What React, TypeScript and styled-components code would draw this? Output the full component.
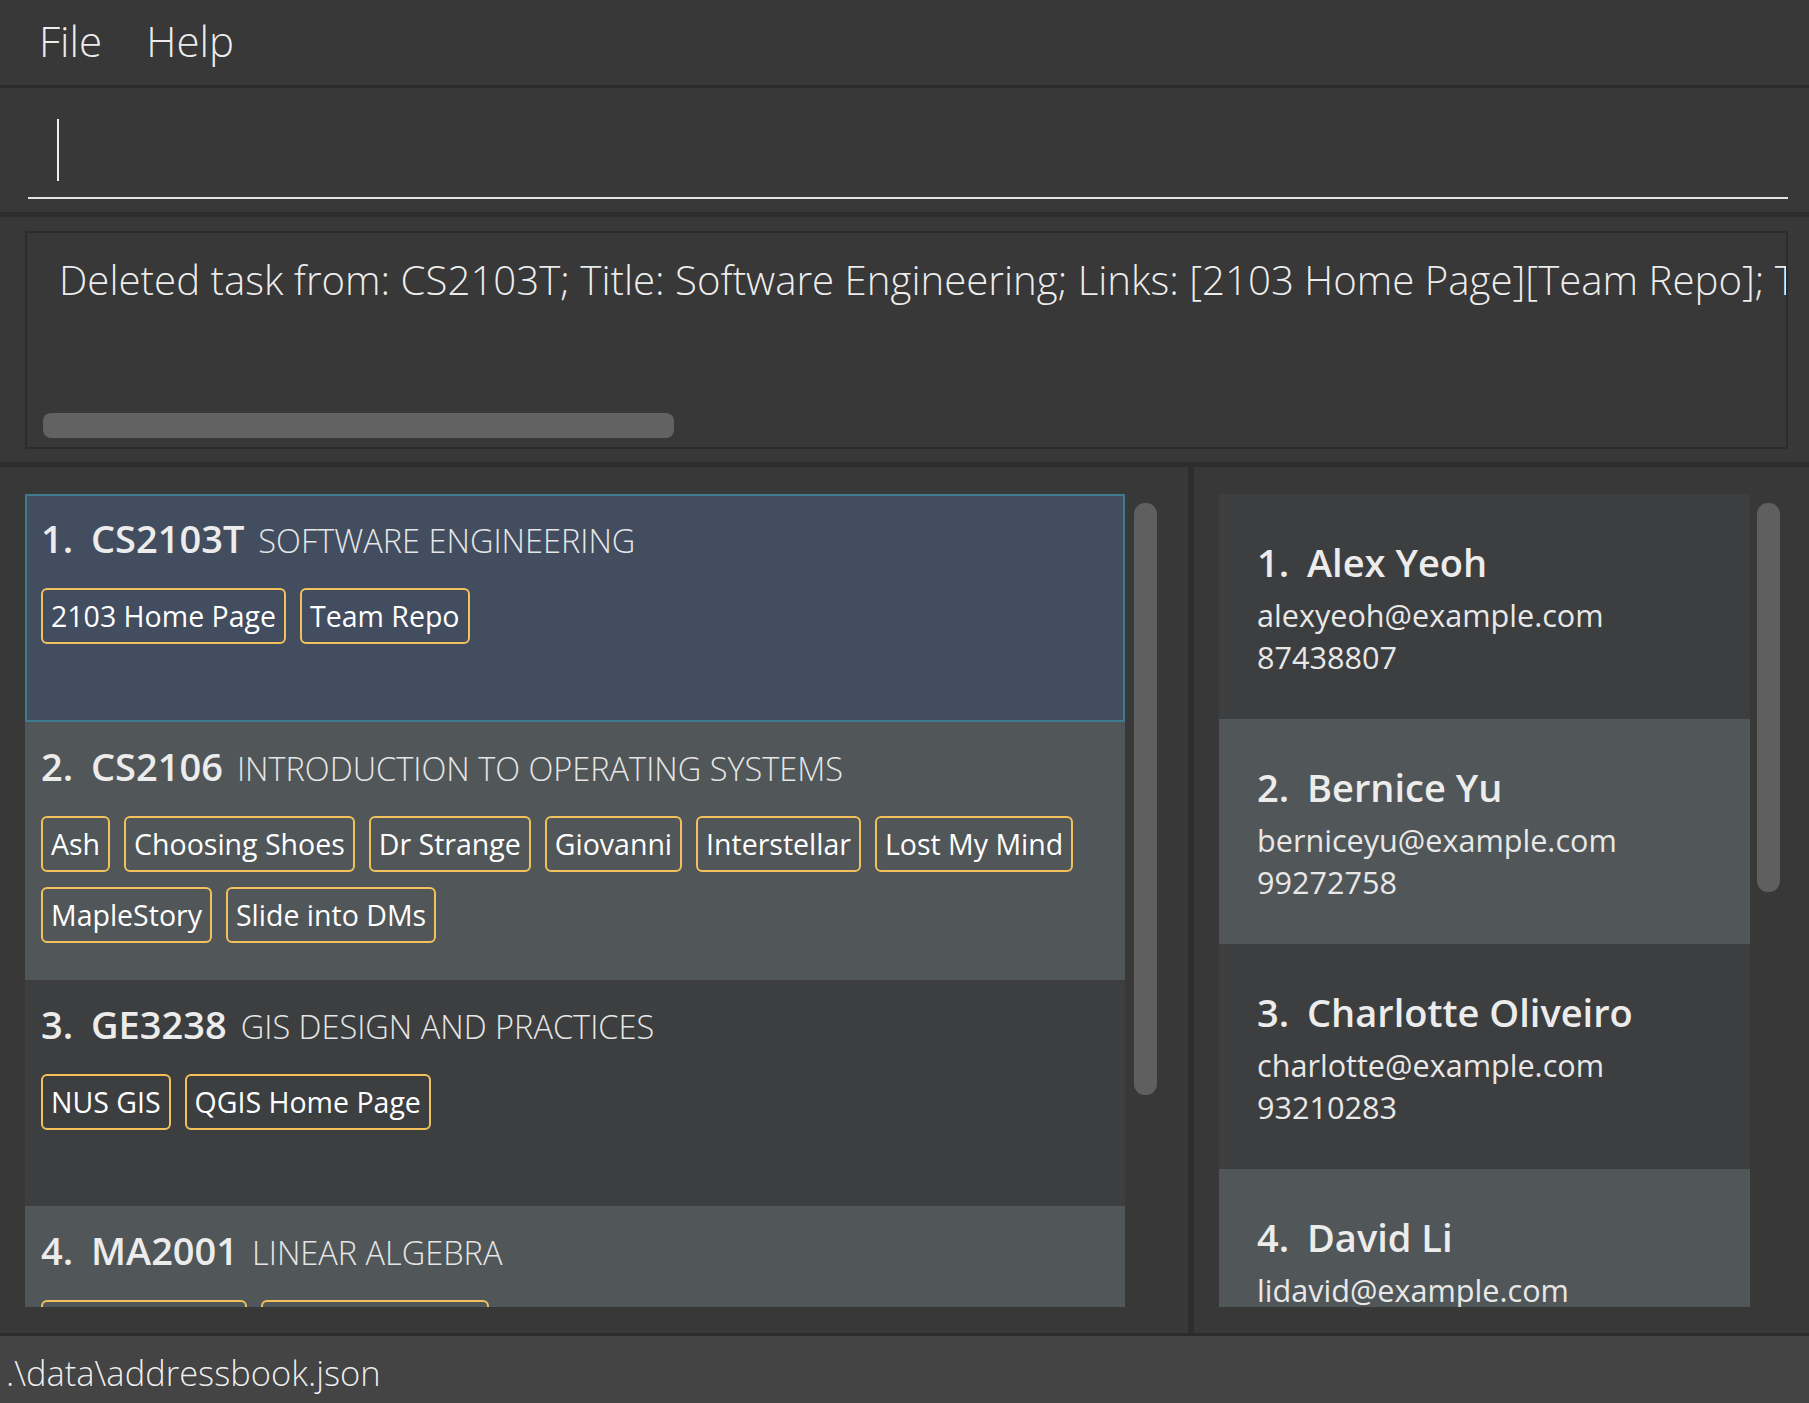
import React from "react";
import styled, { createGlobalStyle } from "styled-components";

type Tone = "even" | "odd" | "selected";

const GlobalStyle = createGlobalStyle`
  html, body {
    margin: 0;
    padding: 0;
    background: #383838;
  }
  body {
    font-family: "Open Sans", "Noto Sans", sans-serif;
    color: #ffffff;
  }
  * {
    box-sizing: border-box;
  }
`;

const toneColor: Record<Tone, string> = {
  even: "#3c3e3f",
  odd: "#515658",
  selected: "#424d5f",
};

const Window = styled.div`
  width: 1809px;
  height: 1403px;
  display: flex;
  flex-direction: column;
  background: #383838;
  overflow: hidden;
`;

const MenuBar = styled.div`
  height: 88px;
  flex: none;
  display: flex;
  gap: 44px;
  padding-left: 39px;
  border-bottom: 3px solid #2b2b2b;
`;

const MenuItem = styled.span`
  font-weight: 300;
  font-size: 42px;
  line-height: 81px;
  color: rgba(255, 255, 255, 0.92);
`;

const CommandPane = styled.div`
  height: 129px;
  flex: none;
  padding: 0 21px 0 28px;
  border-bottom: 5px solid #2d2d2d;
`;

const CommandField = styled.div`
  height: 111px;
  padding: 31px 0 0 29px;
  border-bottom: 2px solid #e4e4e4;
`;

const Caret = styled.div`
  width: 2px;
  height: 62px;
  background: #f0f0f0;
`;

const ResultPane = styled.div`
  height: 250px;
  flex: none;
  padding: 14px 21px 0 25px;
  border-bottom: 5px solid #2d2d2d;
`;

const ResultBox = styled.div`
  height: 218px;
  border: 2px solid #2c2c2c;
  display: flex;
  flex-direction: column;
  justify-content: space-between;
  padding: 21px 0 9px 16px;
  overflow: hidden;
`;

const ResultText = styled.div`
  margin-left: 16px;
  white-space: nowrap;
  font-weight: 300;
  font-size: 40.2px;
  line-height: 52px;
  color: rgba(255, 255, 255, 0.92);
`;

const HThumb = styled.div`
  width: 631px;
  height: 25px;
  flex: none;
  border-radius: 8px;
  background: #626262;
`;

const Lists = styled.div`
  flex: 1;
  display: flex;
  min-height: 0;
  border-bottom: 3px solid #2c2c2c;
`;

const ListPane = styled.div<{ $width: number }>`
  width: ${({ $width }) => $width}px;
  flex: none;
  display: flex;
  padding: 27px 25px 26px 25px;
`;

const ListView = styled.div`
  flex: 1;
  display: flex;
  flex-direction: column;
  overflow: hidden;
`;

const ScrollLane = styled.div<{ $width: number; $inset: number }>`
  width: ${({ $width }) => $width}px;
  flex: none;
  padding: 9px 0 0 ${({ $inset }) => $inset}px;
`;

const VThumb = styled.div<{ $height: number }>`
  width: 23px;
  height: ${({ $height }) => $height}px;
  border-radius: 11px;
  background: #5f5f5f;
`;

const Divider = styled.div`
  width: 6px;
  flex: none;
  background: #2e2e2e;
`;

const StatusBar = styled.div`
  flex: none;
  height: 67px;
  display: flex;
  align-items: center;
  padding: 6px 0 0 6px;
  background: #444444;
  font-weight: 300;
  font-size: 34.5px;
  color: rgba(255, 255, 255, 0.92);
`;

/* task cards */

const TaskCard = styled.div<{ $tone: Tone }>`
  flex: none;
  min-height: ${({ $tone }) => ($tone === "selected" ? 228 : 226)}px;
  padding: 20px 16px 37px 16px;
  background: ${({ $tone }) => toneColor[$tone]};
  box-shadow: ${({ $tone }) =>
    $tone === "selected" ? "inset 0 0 0 2px #3e7b91" : "none"};
`;

const TitleRow = styled.div`
  display: flex;
  align-items: baseline;
  line-height: 48px;
  white-space: nowrap;
`;

const Index = styled.span`
  width: 50px;
  flex: none;
  font-weight: 600;
  font-size: 38px;
  color: #ececec;
`;

const Code = styled.span`
  font-weight: 600;
  font-size: 38px;
  color: #ececec;
  margin-right: 14px;
`;

const CourseTitle = styled.span`
  font-weight: 300;
  font-size: 32.5px;
  text-transform: uppercase;
  color: #e6e6e6;
`;

const TagList = styled.div`
  display: flex;
  flex-wrap: wrap;
  gap: 15px 14px;
  margin-top: 23px;
`;

const Tag = styled.span`
  height: 56px;
  padding: 0 8px;
  border: 2px solid #f2c15c;
  border-radius: 6px;
  font-size: 28.5px;
  line-height: 52px;
  color: #ffffff;
  white-space: nowrap;
`;

/* person cards */

const PersonCard = styled.div<{ $tone: Tone }>`
  flex: none;
  height: 225px;
  padding: 44px 0 0 38px;
  background: ${({ $tone }) => toneColor[$tone]};
`;

const NameRow = styled.div`
  display: flex;
  align-items: baseline;
  line-height: 48px;
  white-space: nowrap;
`;

const Name = styled.span`
  font-weight: 600;
  font-size: 38px;
  color: #ececec;
`;

const Detail = styled.div<{ $first?: boolean }>`
  margin-top: ${({ $first }) => ($first ? 8 : 0)}px;
  font-size: 30.6px;
  line-height: 42px;
  color: #e8e8e8;
  white-space: nowrap;
`;

const tasks = [
  {
    code: "CS2103T",
    title: "Software Engineering",
    links: ["2103 Home Page", "Team Repo"],
  },
  {
    code: "CS2106",
    title: "Introduction to Operating Systems",
    links: [
      "Ash",
      "Choosing Shoes",
      "Dr Strange",
      "Giovanni",
      "Interstellar",
      "Lost My Mind",
      "MapleStory",
      "Slide into DMs",
    ],
  },
  {
    code: "GE3238",
    title: "GIS Design and Practices",
    links: ["NUS GIS", "QGIS Home Page"],
  },
  {
    code: "MA2001",
    title: "Linear Algebra",
    links: ["Lecture Notes", "Tutorial Answer"],
  },
];

const persons = [
  { name: "Alex Yeoh", email: "alexyeoh@example.com", phone: "87438807" },
  { name: "Bernice Yu", email: "berniceyu@example.com", phone: "99272758" },
  {
    name: "Charlotte Oliveiro",
    email: "charlotte@example.com",
    phone: "93210283",
  },
  { name: "David Li", email: "lidavid@example.com", phone: "91031282" },
];

const tone = (i: number, selected?: boolean): Tone =>
  selected ? "selected" : i % 2 === 0 ? "even" : "odd";

export default function App() {
  return (
    <Window>
      <GlobalStyle />
      <MenuBar>
        <MenuItem>File</MenuItem>
        <MenuItem>Help</MenuItem>
      </MenuBar>

      <CommandPane>
        <CommandField>
          <Caret />
        </CommandField>
      </CommandPane>

      <ResultPane>
        <ResultBox>
          <ResultText>
            Deleted task from: CS2103T; Title: Software Engineering; Links:
            [2103 Home Page][Team Repo]; Tags: [module]
          </ResultText>
          <HThumb />
        </ResultBox>
      </ResultPane>

      <Lists>
        <ListPane $width={1188}>
          <ListView>
            {tasks.map((t, i) => (
              <TaskCard key={t.code} $tone={tone(i, i === 0)}>
                <TitleRow>
                  <Index>{i + 1}.</Index>
                  <Code>{t.code}</Code>
                  <CourseTitle>{t.title}</CourseTitle>
                </TitleRow>
                <TagList>
                  {t.links.map((l) => (
                    <Tag key={l}>{l}</Tag>
                  ))}
                </TagList>
              </TaskCard>
            ))}
          </ListView>
          <ScrollLane $width={38} $inset={9}>
            <VThumb $height={592} />
          </ScrollLane>
        </ListPane>

        <Divider />

        <ListPane $width={615}>
          <ListView>
            {persons.map((p, i) => (
              <PersonCard key={p.name} $tone={tone(i)}>
                <NameRow>
                  <Index>{i + 1}.</Index>
                  <Name>{p.name}</Name>
                </NameRow>
                <Detail $first>{p.email}</Detail>
                <Detail>{p.phone}</Detail>
              </PersonCard>
            ))}
          </ListView>
          <ScrollLane $width={34} $inset={7}>
            <VThumb $height={389} />
          </ScrollLane>
        </ListPane>
      </Lists>

      <StatusBar>.\data\addressbook.json</StatusBar>
    </Window>
  );
}
